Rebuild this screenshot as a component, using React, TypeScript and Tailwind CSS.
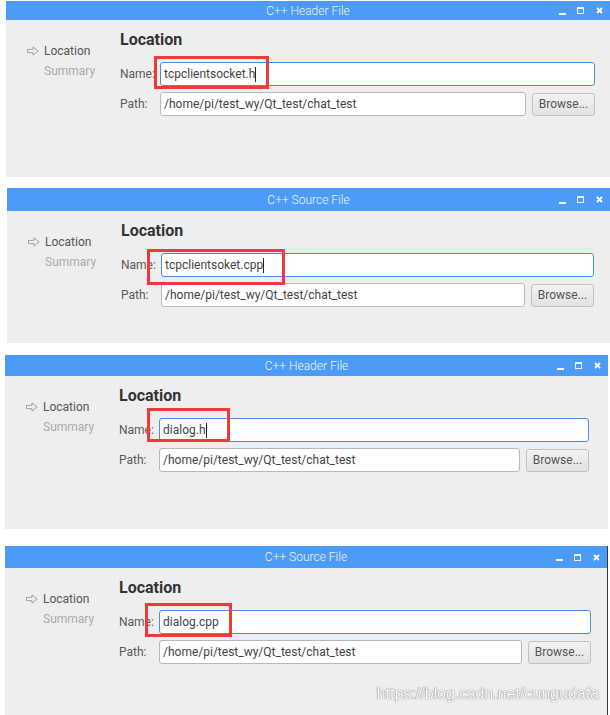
import React from "react";

type Panel = {
  title: string;
  file: string;
  caret: boolean;
  frame: string;
  bar: string;
  body: string;
  form: string;
  mark: string;
};

const panels: Panel[] = [
  {
    title: "C++ Header File",
    file: "tcpclientsocket.h",
    caret: true,
    frame: "ml-[6px] mt-[1px] w-[604px]",
    bar: "h-[19px]",
    body: "h-[157px]",
    form: "pr-[15px]",
    mark: "left-[148px] top-[36px] w-[115px] h-[33px]",
  },
  {
    title: "C++ Source File",
    file: "tcpclientsoket.cpp",
    caret: true,
    frame: "ml-[7px] mt-[11px] w-[603px]",
    bar: "h-[23px]",
    body: "h-[132px]",
    form: "pr-[16px]",
    mark: "left-[140px] top-[38px] w-[138px] h-[36px]",
  },
  {
    title: "C++ Header File",
    file: "dialog.h",
    caret: true,
    frame: "ml-[5px] mt-[12px] w-[603px]",
    bar: "h-[21px]",
    body: "h-[153px]",
    form: "pr-[19px]",
    mark: "left-[142px] top-[32px] w-[83px] h-[34px]",
  },
  {
    title: "C++ Source File",
    file: "dialog.cpp",
    caret: false,
    frame: "ml-[5px] mt-[17px] w-[603px] border-r border-[#3a3a3a]",
    bar: "h-[22px]",
    body: "h-[147px]",
    form: "pr-[16px]",
    mark: "left-[140px] top-[35px] w-[87px] h-[34px]",
  },
];

const NavArrow = () => (
  <svg width="12" height="10" viewBox="0 0 12 10" className="shrink-0">
    <path
      d="M0.5 3.4 H6 V0.9 L11.2 5 L6 9.1 V6.6 H0.5 Z"
      fill="none"
      stroke="#9a9a9a"
      strokeWidth="0.9"
      strokeLinejoin="round"
    />
  </svg>
);

const WindowButtons = () => (
  <div className="flex items-center justify-end pr-[7px]">
    <div className="mt-[6px] w-[7px] h-[2px] bg-white/90" />
    <div className="ml-[11px] w-[7px] h-[7px] border border-t-2 border-white/90" />
    <svg width="7" height="7" viewBox="0 0 7 7" className="ml-[12px]">
      <path d="M1 1 L6 6 M6 1 L1 6" stroke="white" strokeWidth="1.8" />
    </svg>
  </div>
);

const Dialog = ({ p, last }: { p: Panel; last: boolean }) => {
  return (
    <div className={`relative flex flex-col ${p.frame}`}>
      <div className={`grid grid-cols-[1fr_auto_1fr] items-center bg-[#4b9bf7] ${p.bar}`}>
        <div />
        <span className="text-[12px] text-white/95 font-light">{p.title}</span>
        <WindowButtons />
      </div>

      <div className={`relative flex bg-[#eeeeee] ${p.body}`}>
        <div className="w-[114px] shrink-0 pl-[21px] pt-[21px] text-[12px] leading-[20px]">
          <div className="flex items-center gap-[5px] text-[#555555]">
            <NavArrow />
            <span>Location</span>
          </div>
          <div className="pl-[17px] text-[#ababab]">Summary</div>
        </div>

        <div className={`flex-1 pt-[8px] ${p.form}`}>
          <h2 className="text-[16px] leading-[24px] font-bold text-[#333333]">Location</h2>

          <div className="mt-[10px] flex items-center">
            <span className="w-[40px] shrink-0 text-[12px] text-[#5a5a5a]">Name:</span>
            <div className="flex-1 h-[24px] flex items-center bg-white border border-[#4a8fdc] rounded-[3px] pl-[3px] text-[12px] text-[#444444]">
              <span>{p.file}</span>
              {p.caret && <span className="w-px h-[15px] bg-[#222222]" />}
            </div>
          </div>

          <div className="mt-[6px] flex items-center">
            <span className="w-[40px] shrink-0 text-[12px] text-[#5a5a5a]">Path:</span>
            <div className="flex-1 h-[24px] flex items-center bg-white border border-[#b8b8b8] rounded-[3px] pl-[3px] text-[12px] text-[#444444]">
              /home/pi/test_wy/Qt_test/chat_test
            </div>
            <button className="ml-[6px] w-[63px] h-[23px] rounded-[3px] border border-[#c2c2c2] bg-gradient-to-b from-[#f2f2f2] to-[#e2e2e2] text-[12px] text-[#555555]">
              Browse...
            </button>
          </div>
        </div>

        {/* highlight around the file name */}
        <div className={`absolute border-[3px] border-[#f0393b] ${p.mark}`} />

        {last && (
          <span className="absolute right-[8px] bottom-[9px] text-[16px] text-white [font-family:'Liberation_Sans',Arial,sans-serif] [text-shadow:0_0_1px_#7a7a7a,0_0_1px_#7a7a7a]">
            https://blog.csdn.net/cungudafa
          </span>
        )}
      </div>
    </div>
  );
};

export default function App() {
  return (
    <div className="w-[610px] h-[715px] overflow-hidden bg-white [font-family:Roboto,'Liberation_Sans',sans-serif]">
      {panels.map((p, i) => (
        <Dialog key={i} p={p} last={i === panels.length - 1} />
      ))}
    </div>
  );
}
